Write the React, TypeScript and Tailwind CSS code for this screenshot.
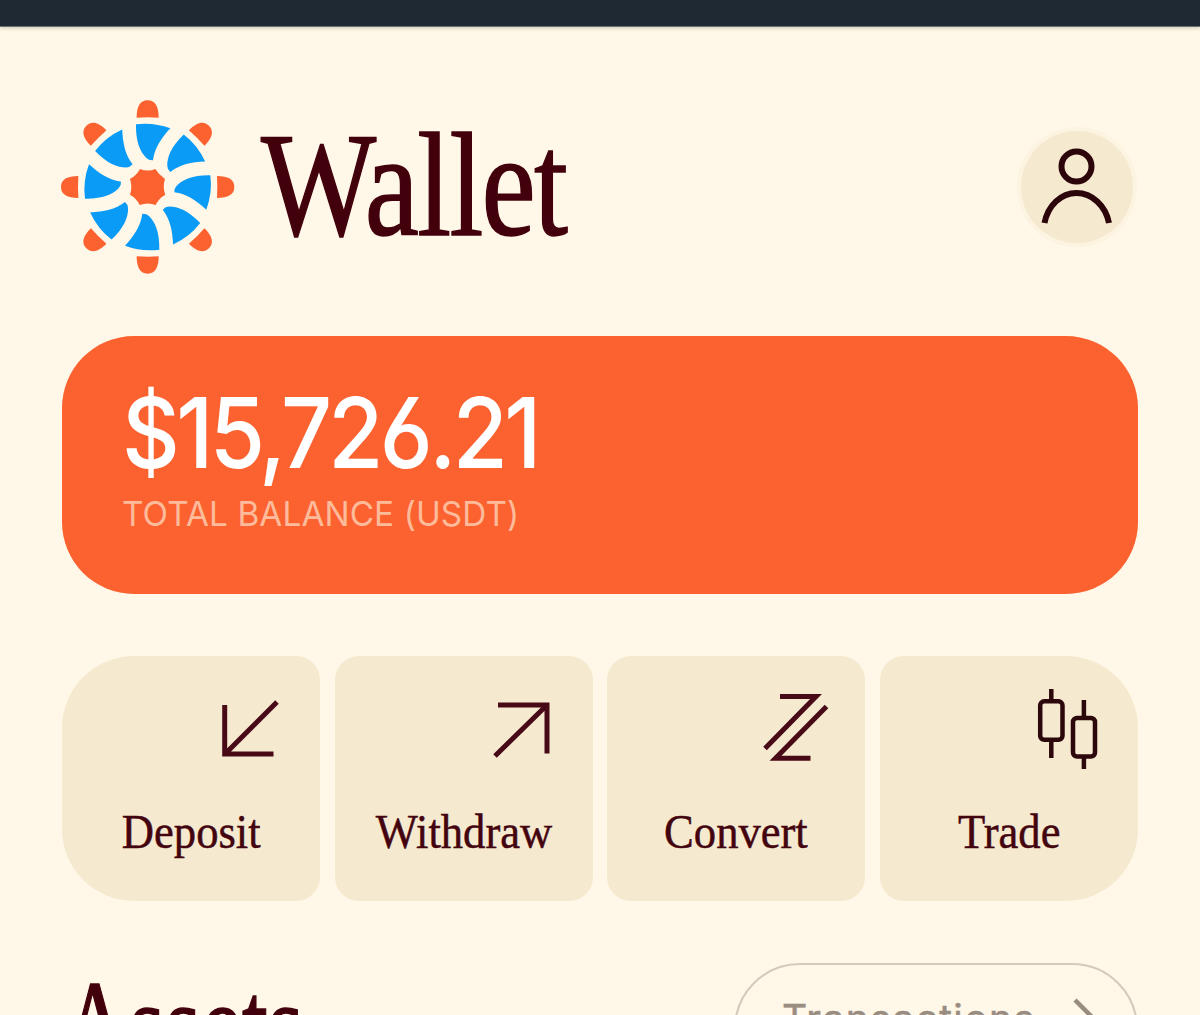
import type { ReactNode } from "react";

const SERIF = "font-['Liberation_Serif',serif]";
const SANS = "font-['Inter',sans-serif]";

const SPOKES = [0, 45, 90, 135, 180, 225, 270, 315];

function Logo() {
  return (
    <svg className="w-[200px] h-[195px] shrink-0" viewBox="0 0 600 585">
      {SPOKES.map((angle) => (
        <g key={angle} transform={`rotate(${angle} 293 291)`}>
          <path fill="#fc622f" d="M260 83C260 50 270 31 293 31C316 31 326 50 326 83Q293 81 260 83Z" />
          <path fill="#0a9bf7" d="M258 103Q310 96 361 115C333 146 314 174 309 211Q297 212 289 204C270 185 257 155 258 103Z" />
        </g>
      ))}
      <path
        fill="#fc622f"
        d="M270 237Q293 246 316 237Q326 254 345 267Q337 291 346 314Q326 325 317 345Q293 336 269 345Q260 325 240 314Q248 291 240 267Q260 256 270 237Z"
      />
    </svg>
  );
}

function Avatar() {
  return (
    <button className="size-[120px] rounded-full bg-[#fcf3e0] p-[4px]">
      <span className="block size-[112px] rounded-full bg-[#f5ead0]">
        <svg className="size-[112px]" viewBox="0 0 112 112" fill="none" stroke="#2c050b" strokeWidth="6">
          <circle cx="55.5" cy="35.5" r="15" />
          <path d="M23.5 92C27 74.500 40 62 55.500 62S84.500 74.500 88 92" />
        </svg>
      </span>
    </button>
  );
}

interface Action {
  label: string;
  shape: string;
  icon: ReactNode;
}

const ACTIONS: Action[] = [
  {
    label: "Deposit",
    shape: "rounded-l-[72px] rounded-r-[24px]",
    icon: <path d="M22.700 29V78H71.500M23 78L75 26" />,
  },
  {
    label: "Withdraw",
    shape: "rounded-[24px]",
    icon: <path d="M23 29H72V77.500M72 29L20 80" />,
  },
  {
    label: "Convert",
    shape: "rounded-[24px]",
    icon: <path strokeMiterlimit="10" d="M33 20.500H69L18 72.500M79.500 30.500L28.500 82.300H63.500" />,
  },
  {
    label: "Trade",
    shape: "rounded-l-[24px] rounded-r-[72px]",
    icon: (
      <g stroke="#2c070b" strokeWidth="4.5">
        <rect x="20.200" y="25.300" width="22.300" height="38.500" rx="4" />
        <rect x="53" y="42" width="22" height="38.500" rx="4" />
        <path d="M31.300 13V25M31.300 64V82M63.900 24V42M63.900 80V93" />
      </g>
    ),
  },
];

function ActionTile({ label, shape, icon }: Action) {
  return (
    <button className={`h-[245px] bg-[#f5ead0] pt-5 flex flex-col ${shape}`}>
      <svg
        className="size-[100px] self-end mr-[18px]"
        viewBox="0 0 100 100"
        fill="none"
        stroke="#480a16"
        strokeWidth="5"
      >
        {icon}
      </svg>
      <span
        className={`${SERIF} self-center mt-[28px] text-[49px] leading-[56px] text-[#43040f] scale-x-[0.91] [-webkit-text-stroke:0.5px_#43040f]`}
      >
        {label}
      </span>
    </button>
  );
}

export default function App() {
  return (
    <div className="w-[1200px] h-[1015px] overflow-hidden bg-[#fff7e7] flex flex-col">
      <div className="h-[27px] shrink-0 bg-[#1e2934] border-b border-[#6b716f] shadow-[0_1px_4px_#c9c7b8]" />

      <header className="h-[195px] mt-[63px] pl-[50px] pr-[63px] shrink-0 flex items-center">
        <Logo />
        <h1
          className={`${SERIF} ml-[11px] mb-[5px] text-[148px] leading-[150px] tracking-[-2.1px] text-[#42000c] origin-left scale-x-[0.825] [-webkit-text-stroke:1.5px_#42000c]`}
        >
          Wallet
        </h1>
        <div className="ml-auto">
          <Avatar />
        </div>
      </header>

      <section className="mt-[51px] mx-[62px] h-[258px] shrink-0 rounded-[72px] bg-[#fc622f] pl-[60px] pt-[41px] flex flex-col items-start">
        <p
          className={`${SANS} text-[98px] leading-[112px] font-medium tracking-[-4px] text-white origin-left scale-x-[0.913] [font-feature-settings:'cv03','ss01']`}
        >
          $15,726.21
        </p>
        <p
          className={`${SANS} mt-[5px] text-[34px] leading-[40px] font-normal tracking-[0.1px] text-[#fdbb9b] origin-left scale-x-[0.98]`}
        >
          TOTAL BALANCE (USDT)
        </p>
      </section>

      <section className="mt-[62px] mx-[62px] shrink-0 grid grid-cols-4 gap-[14.667px]">
        {ACTIONS.map((action) => (
          <ActionTile key={action.label} {...action} />
        ))}
      </section>

      <section className="mt-[62px] pl-[62px] pr-[62px] flex justify-between items-start">
        <h2
          className={`${SERIF} text-[126px] leading-[126px] text-[#42000c] origin-left scale-x-[0.735] [-webkit-text-stroke:1.5px_#42000c]`}
        >
          Assets
        </h2>
        <button className="w-[404px] h-[138px] shrink-0 rounded-[66px] border-2 border-[#d4cab9] pl-[46px] pr-[34px] pt-[29px] flex items-start justify-between text-[#998d82]">
          <span className={`${SANS} text-[39px] leading-[50px] tracking-[1.4px] [-webkit-text-stroke:0.5px_#998d82]`}>
            Transactions
          </span>
          <svg className="w-[32px] h-[60px]" viewBox="0 0 32 60" fill="none" stroke="currentColor" strokeWidth="4.5">
            <path d="M5 6L26 27L5 48" />
          </svg>
        </button>
      </section>
    </div>
  );
}
